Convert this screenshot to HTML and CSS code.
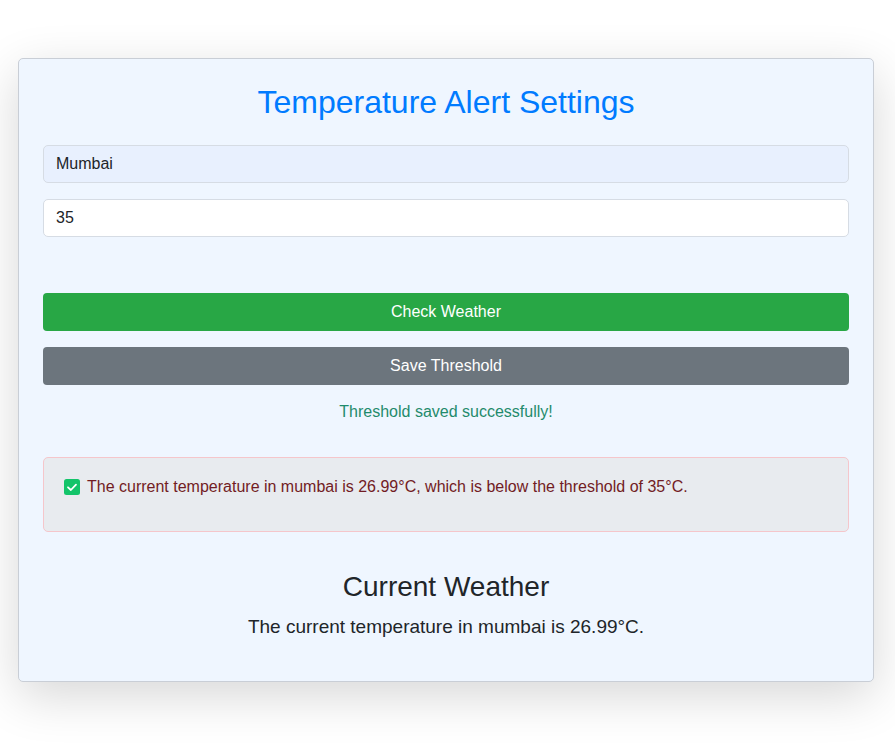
FILE: index.html
```html
<!DOCTYPE html>
<html lang="en">
<head>
<meta charset="utf-8">
<title>Temperature Alert Settings</title>
<link rel="stylesheet" href="styles.css">
</head>
<body>
<div class="card">
  <h1 class="title">Temperature Alert Settings</h1>
  <div class="field"><input class="input input-auto" type="text" value="Mumbai"></div>
  <div class="field"><input class="input" type="text" value="35"></div>
  <div class="actions">
    <button class="btn btn-green">Check Weather</button>
    <button class="btn btn-gray">Save Threshold</button>
  </div>
  <p class="msg">Threshold saved successfully!</p>
  <div class="alert">
    <p class="alert-text"><svg class="check" width="16" height="16" viewBox="0 0 16 16"><rect x="0" y="0" width="16" height="16" rx="2.5" fill="#13c46a"/><path d="M4 8.3 L6.9 11 L12 5.6" fill="none" stroke="#fff" stroke-width="1.8" stroke-linecap="round" stroke-linejoin="round"/></svg> The current temperature in mumbai is 26.99°C, which is below the threshold of 35°C.</p>
  </div>
  <h2 class="sub">Current Weather</h2>
  <p class="weather">The current temperature in mumbai is 26.99°C.</p>
</div>
</body>
</html>
```
FILE: styles.css
```css
* { box-sizing: border-box; }
html, body { margin: 0; padding: 0; background: #fff; }
body {
  font-family: "Liberation Sans", Arial, sans-serif;
  color: #212529;
  min-height: 745px;
  padding-top: 58px;
  padding-bottom: 63px;
}
.card {
  width: 856px;
  margin: 0 0 0 18px;
  background: #eff6ff;
  border: 1px solid #c9ced6;
  border-radius: 5px;
  padding: 24px 24px 43px;
  box-shadow: 0 14px 50px rgba(0,0,0,0.16);
}
.title {
  margin: 0 0 24px;
  text-align: center;
  font-weight: 400;
  font-size: 32px;
  line-height: 38px;
  color: #007bff;
}
.field { margin-bottom: 16px; }
.input {
  display: block;
  width: 100%;
  height: 38px;
  padding: 0 12px;
  font-family: "Liberation Sans", Arial, sans-serif;
  font-size: 16px;
  color: #212529;
  background: #fff;
  border: 1px solid #d6dce4;
  border-radius: 5px;
  outline: none;
}
.input-auto { background: #e8f0fe; }
.actions {
  margin-top: 56px;
  display: flex;
  flex-direction: column;
  gap: 16px;
}
.btn {
  display: block;
  width: 100%;
  height: 38px;
  border: none;
  border-radius: 4px;
  color: #fff;
  font-family: "Liberation Sans", Arial, sans-serif;
  font-size: 16px;
}
.btn-green { background: #28a745; }
.btn-gray { background: #6c757d; }
.msg {
  margin: 18px 0 0;
  text-align: center;
  font-size: 16px;
  line-height: 18px;
  color: #1f8b6c;
}
.alert {
  margin-top: 36px;
  background: #e8ebef;
  border: 1px solid #f5c6cb;
  border-radius: 5px;
  padding: 20px 20px 19px;
}
.alert-text {
  margin: 0 0 16px;
  font-size: 16px;
  line-height: 18px;
  color: #721c24;
  display: flex;
  align-items: center;
}
.check { flex: none; margin-right: 7px; }
.sub {
  margin: 39px 0 0;
  text-align: center;
  font-weight: 400;
  font-size: 28px;
  line-height: 32px;
  color: #212529;
}
.weather {
  margin: 13px 0 0;
  text-align: center;
  font-size: 19px;
  line-height: 22px;
  color: #212529;
}
```
